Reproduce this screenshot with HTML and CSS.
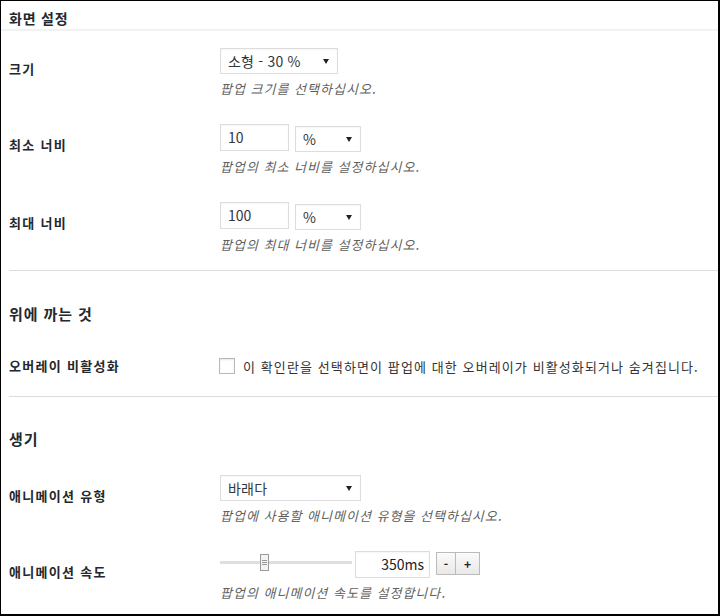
FILE: index.html
```html
<!DOCTYPE html>
<html lang="ko">
<head>
<meta charset="utf-8">
<link rel="stylesheet" href="styles.css">
</head>
<body>
<div class="frame">
  <div class="header">화면 설정</div>
  <div class="content">
    <div class="section first">
      <div class="row">
        <div class="label">크기</div>
        <div class="field">
          <div class="controls">
            <div class="select w-size">소형 - 30 %<span class="arrow"></span></div>
          </div>
          <div class="desc">팝업 크기를 선택하십시오.</div>
        </div>
      </div>
      <div class="row">
        <div class="label">최소 너비</div>
        <div class="field">
          <div class="controls">
            <div class="input w-num">10</div>
            <div class="select w-unit">%<span class="arrow"></span></div>
          </div>
          <div class="desc">팝업의 최소 너비를 설정하십시오.</div>
        </div>
      </div>
      <div class="row">
        <div class="label">최대 너비</div>
        <div class="field">
          <div class="controls">
            <div class="input w-num">100</div>
            <div class="select w-unit">%<span class="arrow"></span></div>
          </div>
          <div class="desc">팝업의 최대 너비를 설정하십시오.</div>
        </div>
      </div>
    </div>
    <div class="divider"></div>
    <div class="section">
      <div class="heading">위에 까는 것</div>
      <div class="row row-check">
        <div class="label">오버레이 비활성화</div>
        <div class="field check-field">
          <span class="checkbox"></span>
          <span class="check-text">이 확인란을 선택하면이 팝업에 대한 오버레이가 비활성화되거나 숨겨집니다.</span>
        </div>
      </div>
    </div>
    <div class="divider"></div>
    <div class="section">
      <div class="heading heading-tight">생기</div>
      <div class="row">
        <div class="label">애니메이션 유형</div>
        <div class="field">
          <div class="controls">
            <div class="select w-anim">바래다<span class="arrow"></span></div>
          </div>
          <div class="desc">팝업에 사용할 애니메이션 유형을 선택하십시오.</div>
        </div>
      </div>
      <div class="row">
        <div class="label">애니메이션 속도</div>
        <div class="field">
          <div class="controls">
            <div class="slider">
              <div class="track"></div>
              <div class="thumb"><i></i><i></i><i></i></div>
            </div>
            <div class="input w-speed">350ms</div>
            <div class="btns">
              <span class="btn btn-minus">-</span>
              <span class="btn btn-plus">+</span>
            </div>
          </div>
          <div class="desc">팝업의 애니메이션 속도를 설정합니다.</div>
        </div>
      </div>
    </div>
  </div>
</div>
</body>
</html>
```
FILE: styles.css
```css
* { box-sizing: border-box; }
html, body { margin: 0; padding: 0; background: #fff; }
body {
  font-family: "Noto Sans CJK KR", "Noto Sans", sans-serif;
  font-size: 13px;
  color: #23282d;
}
.frame {
  width: 720px;
  height: 616px;
  border-style: solid;
  border-color: #000;
  border-width: 1px 2px 2px 1px;
  overflow: hidden;
  background: #fff;
}
.header {
  height: 30px;
  padding: 7px 8px 0;
  line-height: 20px;
  font-size: 14px;
  font-weight: 700;
  letter-spacing: 0.8px;
  border-bottom: 2px solid #f2f2f2;
}
.content { padding-left: 8px; }
.section.first { padding-top: 5px; }
.row {
  display: flex;
  align-items: flex-start;
  padding: 12px 0 13px;
}
.label {
  width: 211px;
  flex: none;
  padding-top: 11px;
  line-height: 20px;
  font-weight: 700;
  letter-spacing: 1.3px;
}
.field { display: flex; flex-direction: column; }
.controls { display: flex; align-items: flex-start; gap: 6px; }
.select, .input {
  height: 26px;
  border: 1px solid #ddd;
  background: #fff;
  line-height: 24px;
  padding: 0 7px;
  color: #32373c;
  position: relative;
  box-shadow: inset 0 1px 2px rgba(0,0,0,0.04);
}
.select { font-size: 14px; letter-spacing: 0.2px; }
.input { height: 27px; font-size: 14px; }
.controls .w-unit { margin-top: 2px; }
.w-size { width: 118px; }
.w-num { width: 69px; }
.w-unit { width: 66px; }
.w-anim { width: 141px; }
.arrow {
  position: absolute;
  right: 8px;
  top: 10px;
  width: 0;
  height: 0;
  border-left: 3px solid transparent;
  border-right: 3px solid transparent;
  border-top: 5px solid #222;
}
.desc {
  margin-top: 5px;
  line-height: 20px;
  font-style: italic;
  color: #5f5f5f;
  letter-spacing: 1px;
}
.divider {
  height: 1px;
  background: #dcdcdc;
  margin-top: 2px;
}
.heading {
  margin-top: 33px;
  margin-bottom: 16px;
  font-size: 15px;
  line-height: 20px;
  font-weight: 700;
  letter-spacing: 0.9px;
}
.heading.heading-tight { margin-top: 32px; margin-bottom: 14px; }
.row.row-check { padding: 16px 0 18px; }
.row-check .label { padding-top: 0; }
.check-field { flex-direction: row; align-items: center; height: 20px; }
.checkbox {
  width: 16px;
  height: 16px;
  margin-left: -1px;
  border: 1px solid #b4b9be;
  background: #fff;
  box-shadow: inset 0 1px 2px rgba(0,0,0,0.1);
  flex: none;
}
.check-text { margin-left: 8px; color: #333; letter-spacing: 1.1px; }
.slider {
  position: relative;
  width: 132px;
  height: 26px;
  flex: none;
}
.track {
  position: absolute;
  left: 0; right: 0;
  top: 10px;
  height: 3px;
  background: #e2dfda;
}
.thumb {
  position: absolute;
  left: 40px;
  top: 3px;
  width: 9px;
  height: 17px;
  border: 1px solid #9a9a9a;
  background: #f3f3f3;
  display: flex;
  flex-direction: column;
  align-items: center;
  justify-content: center;
  gap: 1px;
}
.thumb i { display: block; width: 5px; height: 1px; background: #999; }
.controls .w-speed {
  width: 75px;
  margin-left: -3px;
  text-align: right;
  padding-right: 5px;
  font-size: 14px;
  color: #222;
}
.btns { display: flex; margin-top: 1px; margin-left: 0; }
.btn {
  height: 23px;
  line-height: 21px;
  border: 1px solid #bbb;
  background: linear-gradient(#fafafa, #e9e9e9);
  text-align: center;
  font-weight: 700;
  font-size: 12px;
  color: #222;
}
.btn-minus { width: 20px; }
.btn-plus { width: 25px; margin-left: -1px; }
```
